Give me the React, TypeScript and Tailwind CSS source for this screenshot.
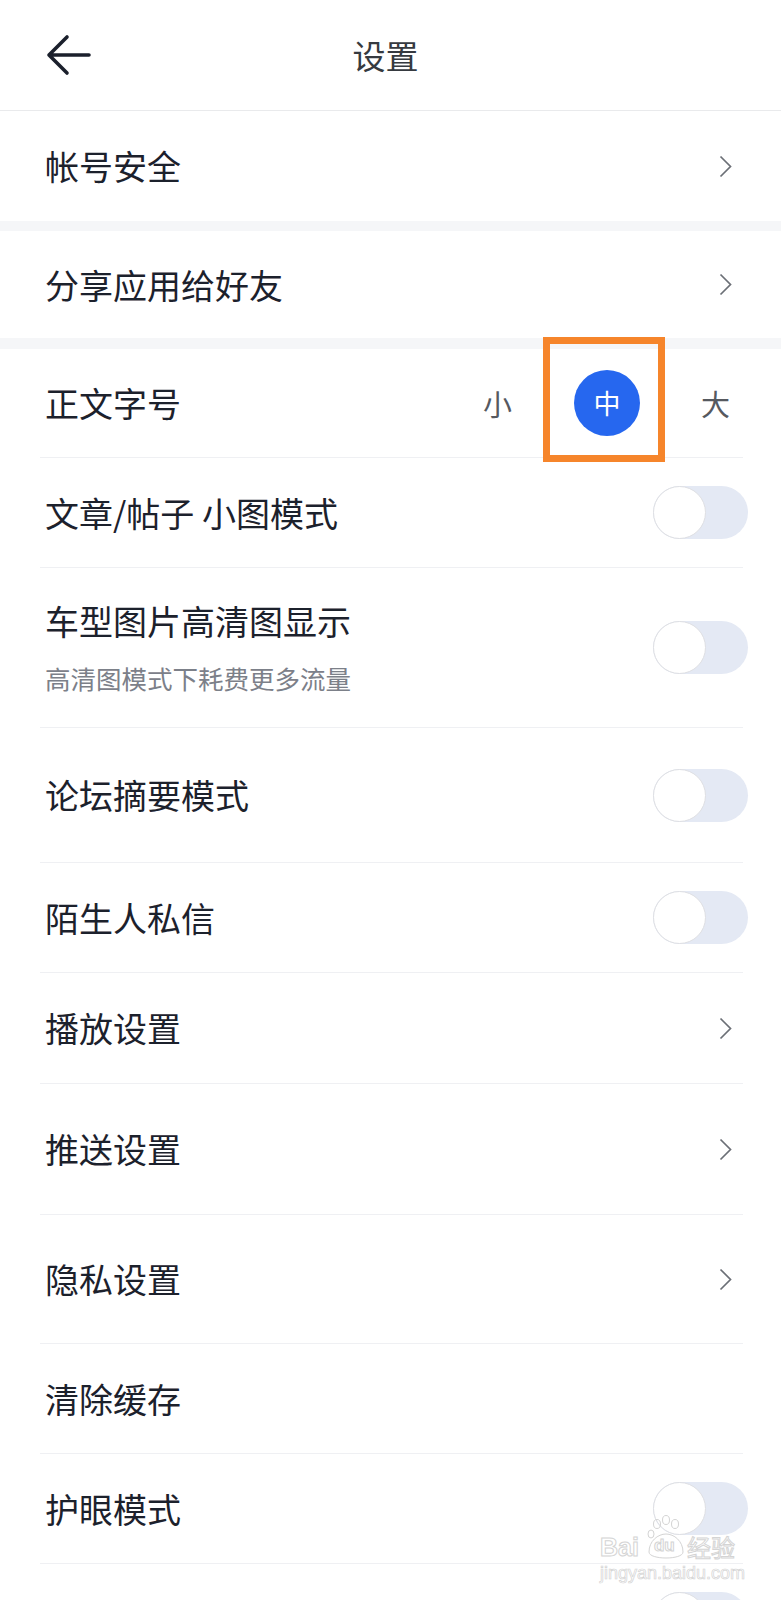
import React from "react";

const FONT = "font-['Noto_Sans_CJK_SC','Noto_Sans',sans-serif]";

function BackArrow() {
  return (
    <svg width="46" height="42" viewBox="0 0 46 42" fill="none">
      <path
        d="M44 21H4M22 3L4 21L22 39"
        stroke="#1b202c"
        strokeWidth="3.6"
        strokeLinecap="round"
        strokeLinejoin="round"
      />
    </svg>
  );
}

function Chevron() {
  return (
    <svg width="13" height="23" viewBox="0 0 13 23" fill="none">
      <path d="M1.5 1.5L11.5 11.5L1.5 21.5" stroke="#6b6f76" strokeWidth="1.7" />
    </svg>
  );
}

function Toggle() {
  return (
    <div className="w-[95px] h-[53px] rounded-full bg-[#e4e9f4] flex items-center">
      <div className="w-[53px] h-[53px] rounded-full bg-white border-[1.5px] border-[#dedfe3]" />
    </div>
  );
}

function Divider() {
  return <div className="ml-[40px] mr-[38px] h-px bg-[#eff0f3]" />;
}

function Gap({ h }: { h: string }) {
  return <div className={`${h} bg-[#f5f6f8]`} />;
}

interface RowProps {
  label: string;
  h: string;
  right?: "chevron" | "toggle" | "none";
  sub?: string;
}

function Row({ label, h, right = "none", sub }: RowProps) {
  return (
    <div className={`${h} flex items-center justify-between pl-[45px]`}>
      <div className="flex flex-col">
        <span className="text-[34px] leading-[44px] text-[#1c212c]">{label}</span>
        {sub && <span className="mt-[17px] text-[25.5px] leading-[36px] text-[#7c8089]">{sub}</span>}
      </div>
      {right === "chevron" && (
        <div className="pr-[49px] flex items-center">
          <Chevron />
        </div>
      )}
      {right === "toggle" && (
        <div className="pr-[33px]">
          <Toggle />
        </div>
      )}
    </div>
  );
}

// faint "Baidu 经验" stamp in the lower right corner
function Watermark() {
  const stroke = "text-transparent [-webkit-text-stroke:1px_#d4d4d4]";
  return (
    <div className="absolute left-[600px] top-[1514px] w-[140px] flex flex-col items-start pointer-events-none whitespace-nowrap">
      <div className="flex items-end h-[46px]">
        <span className={`shrink-0 font-['Liberation_Sans',sans-serif] text-[25px] leading-[26px] font-bold ${stroke}`}>
          Bai
        </span>
        <div className="relative shrink-0 ml-[7px] w-[40px] h-[46px]">
          <svg width="40" height="46" viewBox="0 0 40 46" fill="none" className="absolute left-0 top-0">
            <ellipse cx="11" cy="10" rx="3.5" ry="4.5" stroke="#d4d4d4" strokeWidth="1" />
            <ellipse cx="20" cy="6" rx="3.5" ry="4.5" stroke="#d4d4d4" strokeWidth="1" />
            <ellipse cx="29" cy="10" rx="3.5" ry="4.5" stroke="#d4d4d4" strokeWidth="1" />
            <ellipse cx="5" cy="20" rx="3" ry="4" stroke="#d4d4d4" strokeWidth="1" />
            <path d="M3 38C3 27 12 20 20 20C28 20 37 27 37 38C37 46 3 46 3 38Z" stroke="#d4d4d4" strokeWidth="1" />
          </svg>
          <span className={`absolute left-[8px] top-[23px] font-['Liberation_Sans',sans-serif] text-[17px] leading-[18px] font-bold ${stroke}`}>
            du
          </span>
        </div>
        <span className={`shrink-0 ml-[1px] text-[24px] leading-[26px] ${stroke}`}>经验</span>
      </div>
      <span className="mt-[3px] font-['Liberation_Sans',sans-serif] text-[18px] leading-[20px] text-transparent [-webkit-text-stroke:0.7px_#d4d4d4]">
        jingyan.baidu.com
      </span>
    </div>
  );
}

export default function App() {
  return (
    <div className={`relative w-full h-[1600px] overflow-hidden bg-white ${FONT}`}>
      <header className="h-[111px] grid grid-cols-[1fr_auto_1fr] items-center border-b border-[#e9eaec]">
        <div className="pl-[45px] flex items-center">
          <BackArrow />
        </div>
        <h1 className="text-[33px] leading-[44px] text-[#363a40] font-normal pr-[10px]">设置</h1>
        <div />
      </header>

      <Row label="帐号安全" h="h-[110px]" right="chevron" />
      <Gap h="h-[10px]" />
      <Row label="分享应用给好友" h="h-[107px]" right="chevron" />
      <Gap h="h-[11px]" />

      <div className="h-[108px] flex items-center justify-between pl-[45px]">
        <span className="text-[34px] leading-[44px] text-[#1c212c]">正文字号</span>
        <div className="flex items-center pr-[51px]">
          <span className="text-[29px] leading-[40px] text-[#56595f]">小</span>
          <div className="ml-[62px] w-[66px] h-[66px] rounded-full bg-[#2667ef] flex items-center justify-center">
            <span className="text-[27px] leading-[36px] text-white">中</span>
          </div>
          <span className="ml-[61px] text-[29px] leading-[40px] text-[#56595f]">大</span>
        </div>
      </div>
      <Divider />
      <Row label="文章/帖子 小图模式" h="h-[109px]" right="toggle" />
      <Divider />
      <Row label="车型图片高清图显示" h="h-[159px]" right="toggle" sub="高清图模式下耗费更多流量" />
      <Divider />
      <Row label="论坛摘要模式" h="h-[134px]" right="toggle" />
      <Divider />
      <Row label="陌生人私信" h="h-[109px]" right="toggle" />
      <Divider />
      <Row label="播放设置" h="h-[110px]" right="chevron" />
      <Divider />
      <Row label="推送设置" h="h-[130px]" right="chevron" />
      <Divider />
      <Row label="隐私设置" h="h-[128px]" right="chevron" />
      <Divider />
      <Row label="清除缓存" h="h-[109px]" />
      <Divider />
      <Row label="护眼模式" h="h-[109px]" right="toggle" />
      <Divider />
      <div className="flex justify-end pr-[33px] pt-[28px]">
        <Toggle />
      </div>

      {/* highlight box drawn over the font-size picker */}
      <div className="absolute left-[543px] top-[337px] w-[122px] h-[125px] border-[7px] border-[#f6852b]" />

      <Watermark />
    </div>
  );
}
